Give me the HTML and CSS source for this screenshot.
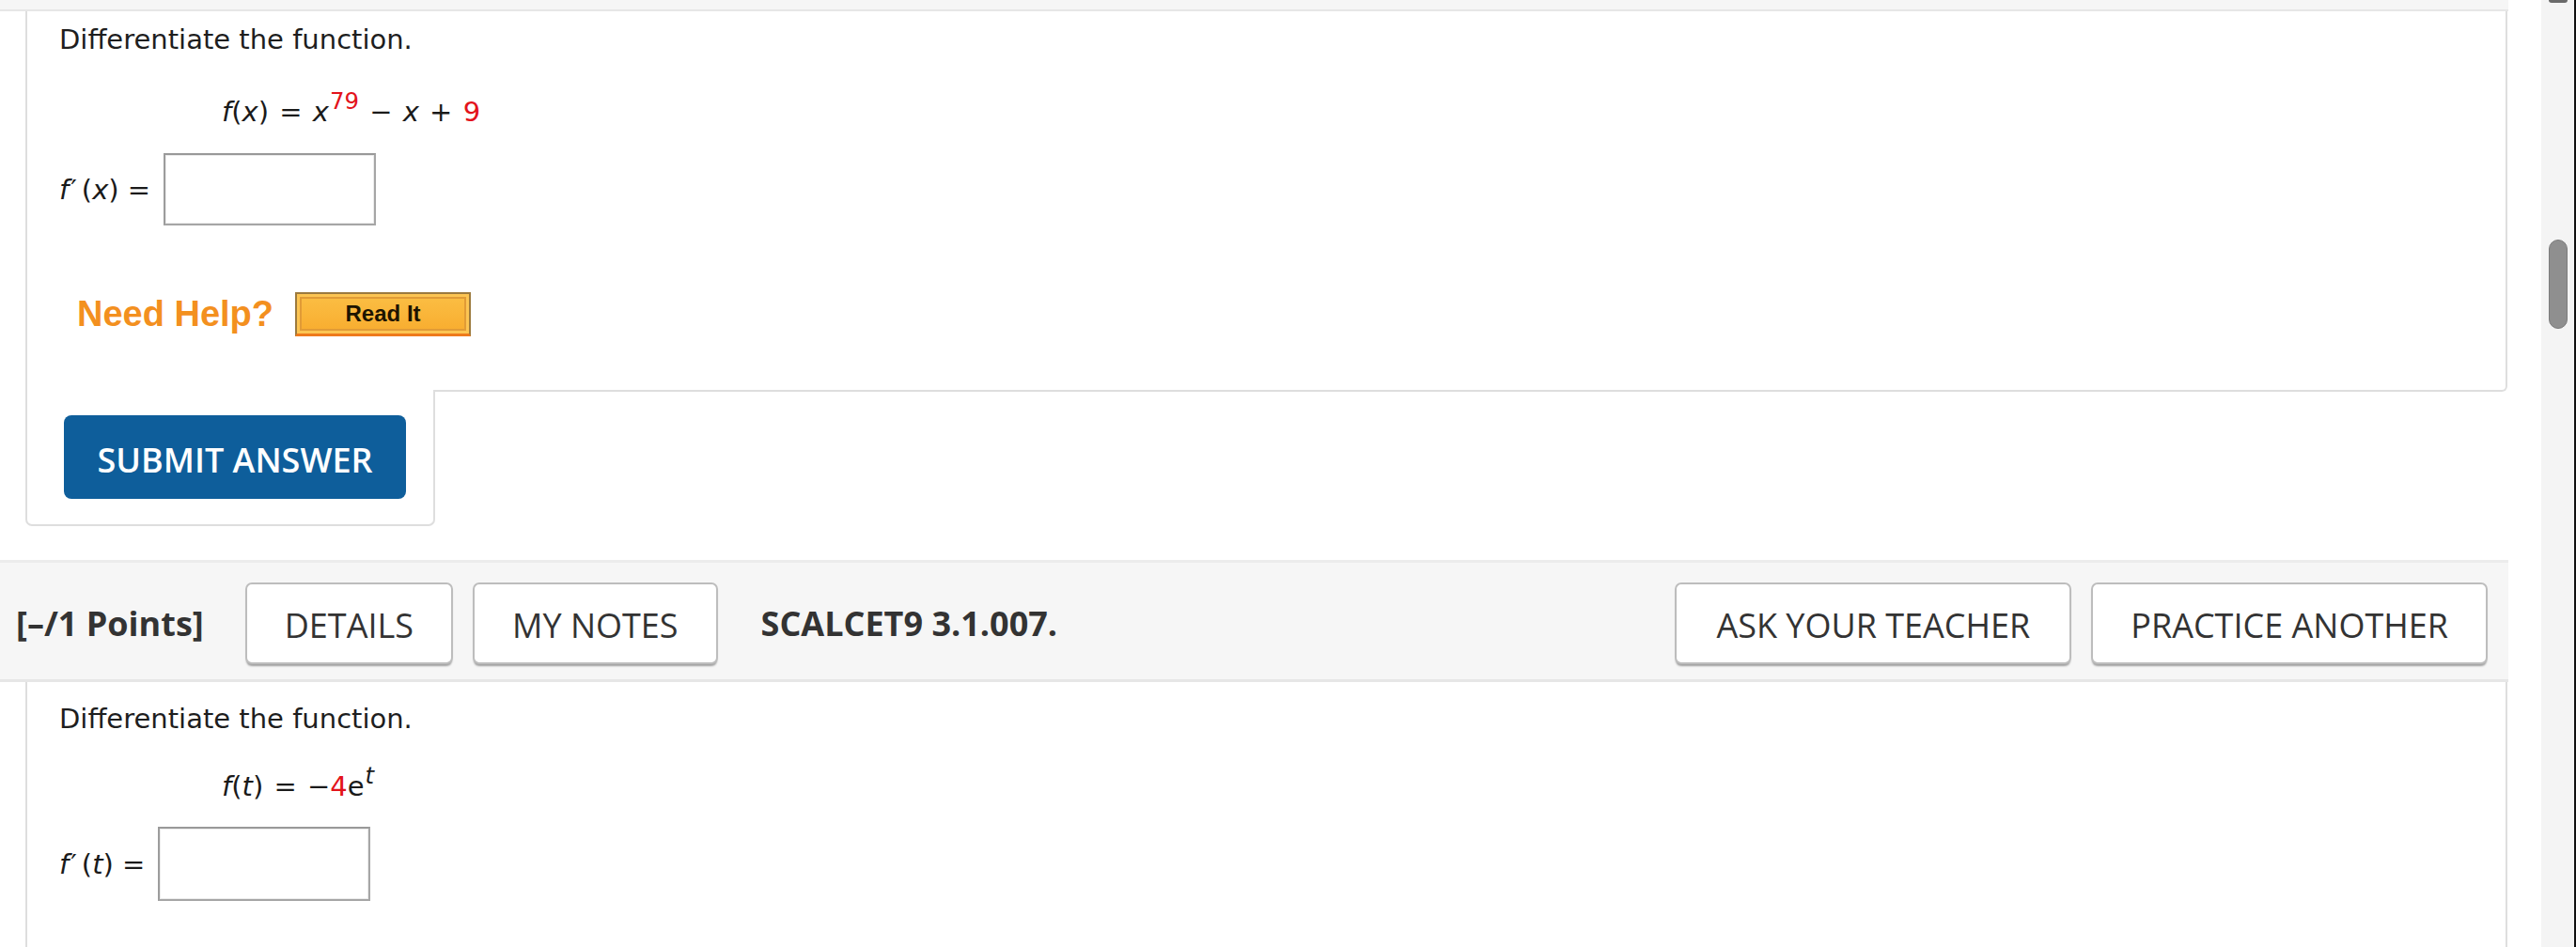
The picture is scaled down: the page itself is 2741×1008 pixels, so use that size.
FILE: index.html
```html
<!DOCTYPE html>
<html lang="en">
<head>
<meta charset="utf-8">
<title>Differentiate the function</title>
<link rel="stylesheet" href="styles.css">
</head>
<body>
<div class="page">
  <main class="main">
    <div class="prev-hdr"></div>

    <section class="card q1">
      <div class="qbody">
        <p class="qtext">Differentiate the function.</p>
        <p class="math"><i>f</i>(<i>x</i>) = <i>x</i><span class="sup red">79</span> − <i>x</i> + <span class="red">9</span></p>
        <div class="ansrow">
          <span class="alabel"><i>f</i><span class="prime">′</span>(<i>x</i>) =</span>
          <span class="ansbox"></span>
        </div>
        <div class="help">
          <span class="needhelp">Need Help?</span>
          <span class="readit">Read It</span>
        </div>
      </div>
      <div class="qfoot">
        <div class="submit-tab">
          <button class="submit" type="button">SUBMIT ANSWER</button>
        </div>
      </div>
    </section>

    <header class="qhdr">
      <span class="pts">[–/1 Points]</span>
      <button class="hbtn" type="button">DETAILS</button>
      <button class="hbtn" type="button">MY NOTES</button>
      <span class="code">SCALCET9 3.1.007.</span>
      <span class="spacer"></span>
      <button class="hbtn hbtn-wide" type="button">ASK YOUR TEACHER</button>
      <button class="hbtn" type="button">PRACTICE ANOTHER</button>
    </header>

    <section class="card q2">
      <div class="qbody">
        <p class="qtext">Differentiate the function.</p>
        <p class="math"><i>f</i>(<i>t</i>) = −<span class="red">4</span>e<span class="sup"><i>t</i></span></p>
        <div class="ansrow">
          <span class="alabel"><i>f</i><span class="prime">′</span>(<i>t</i>) =</span>
          <span class="ansbox"></span>
        </div>
      </div>
    </section>
  </main>

  <div class="scrollbar">
    <div class="sb-top"></div>
    <div class="sb-thumb"></div>
  </div>
  <div class="edge"></div>
</div>
</body>
</html>
```

FILE: styles.css
```css
* { box-sizing: border-box; }

html, body {
  margin: 0;
  padding: 0;
}

body {
  height: 1008px;
  overflow: hidden;
  background: #ffffff;
  font-family: "DejaVu Sans", Verdana, sans-serif;
  color: #1e1e1e;
}

.page {
  display: flex;
  height: 1008px;
}

.main {
  flex: 1;
  min-width: 0;
}

/* bottom of the previous question header */
.prev-hdr {
  height: 12px;
  margin-right: 35px;
  background: #f6f6f6;
  border-bottom: 2px solid #e6e6e6;
}

.card {
  margin: 0 36px 0 27px;
}

.qbody {
  background: #ffffff;
  border: 2px solid #dedede;
  border-top: 0;
  border-bottom-right-radius: 6px;
  padding: 10px 0 57px 34px;
}

.qtext {
  margin: 0;
  font-size: 29px;
  line-height: 40px;
  color: #1e1e1e;
}

.math {
  margin: 37px 0 0;
  padding-left: 173px;
  font-size: 29px;
  line-height: 40px;
  word-spacing: 2px;
  color: #1a1a1a;
}

.math i,
.alabel i {
  font-style: italic;
}

.red {
  color: #e3131b;
}

.sup {
  font-size: 0.84em;
  vertical-align: 0.55em;
  line-height: 0;
  margin-left: 1px;
}

.ansrow {
  display: flex;
  align-items: center;
  margin-top: 24px;
  font-size: 29px;
  color: #1a1a1a;
}

.prime {
  margin: 0 5px 0 2px;
}

.ansbox {
  width: 226px;
  height: 77px;
  margin-left: 14px;
  background: #ffffff;
  border: 2px solid #a6a6a6;
  border-top-color: #999999;
  border-left-color: #9c9c9c;
  box-shadow: inset 0 0 0 1px #ececec;
}

.help {
  display: flex;
  align-items: center;
  margin-top: 71px;
  padding-left: 19px;
}

.needhelp {
  font-family: "Liberation Sans", Arial, sans-serif;
  font-weight: 700;
  font-size: 38px;
  color: #f3901f;
}

.readit {
  display: flex;
  align-items: center;
  justify-content: center;
  width: 187px;
  height: 47px;
  margin-left: 23px;
  background: linear-gradient(#fbbf45, #f8ac2e);
  border: 2px solid #9c7a3e;
  border-bottom: 3px solid #ee7a1c;
  box-shadow: inset 0 0 0 3px #fcc553, inset 0 0 0 5px #e19b36;
  font-family: "Liberation Sans", Arial, sans-serif;
  font-weight: 700;
  font-size: 24px;
  color: #1d1400;
}

.qfoot {
  display: flex;
}

.submit-tab {
  margin-top: -2px;
  padding: 27px 29px 27px 39px;
  background: #ffffff;
  border: 2px solid #dedede;
  border-top: 0;
  border-radius: 0 0 7px 7px;
}

.submit {
  display: block;
  width: 364px;
  height: 89px;
  padding: 6px 0 0;
  border: 0;
  border-radius: 8px;
  background: #0e5e9b;
  color: #ffffff;
  font-family: "Open Sans", "Noto Sans", sans-serif;
  font-weight: 600;
  font-size: 36px;
}

/* question header */
.qhdr {
  display: flex;
  align-items: center;
  height: 130px;
  margin: 36px 35px 0 0;
  padding: 0 22px 0 17px;
  background: #f6f6f6;
  border-top: 3px solid #ececec;
  border-bottom: 3px solid #e6e6e6;
  font-family: "Open Sans", "Noto Sans", sans-serif;
  color: #333333;
}

.pts {
  font-weight: 700;
  font-size: 36px;
  margin-right: 44px;
  margin-top: 5px;
}

.code {
  font-weight: 700;
  font-size: 36px;
  margin-left: 46px;
  margin-top: 5px;
}

.spacer {
  flex: 1;
}

.hbtn {
  height: 87px;
  margin-top: 4px;
  padding: 4px 40px 0;
  background: #ffffff;
  border: 2px solid #bdbdbd;
  border-radius: 7px;
  box-shadow: 0 3px 2px -1px rgba(0, 0, 0, 0.35);
  font-family: "Open Sans", "Noto Sans", sans-serif;
  font-weight: 400;
  font-size: 36px;
  color: #333333;
}

.hbtn-wide {
  padding: 4px 42px 0;
}

.hbtn + .hbtn {
  margin-left: 21px;
}

.q2 .qbody {
  height: 400px;
  padding-top: 19px;
}

.q2 .math {
  margin-top: 32px;
}

.q2 .ansrow {
  margin-top: 23px;
}

.q2 .ansbox {
  width: 226px;
  height: 79px;
}

/* fake scrollbar */
.scrollbar {
  width: 35px;
  display: flex;
  flex-direction: column;
  align-items: center;
  background: #f4f4f4;
}

.sb-top {
  width: 20px;
  height: 3px;
  background: #6a6a6a;
  border-radius: 0 0 3px 3px;
}

.sb-thumb {
  width: 20px;
  height: 95px;
  margin-top: 252px;
  background: #8f8f8f;
  border: 1px solid #7c7c7c;
  border-radius: 10px;
}

.edge {
  width: 2px;
  background: #111111;
}
```
